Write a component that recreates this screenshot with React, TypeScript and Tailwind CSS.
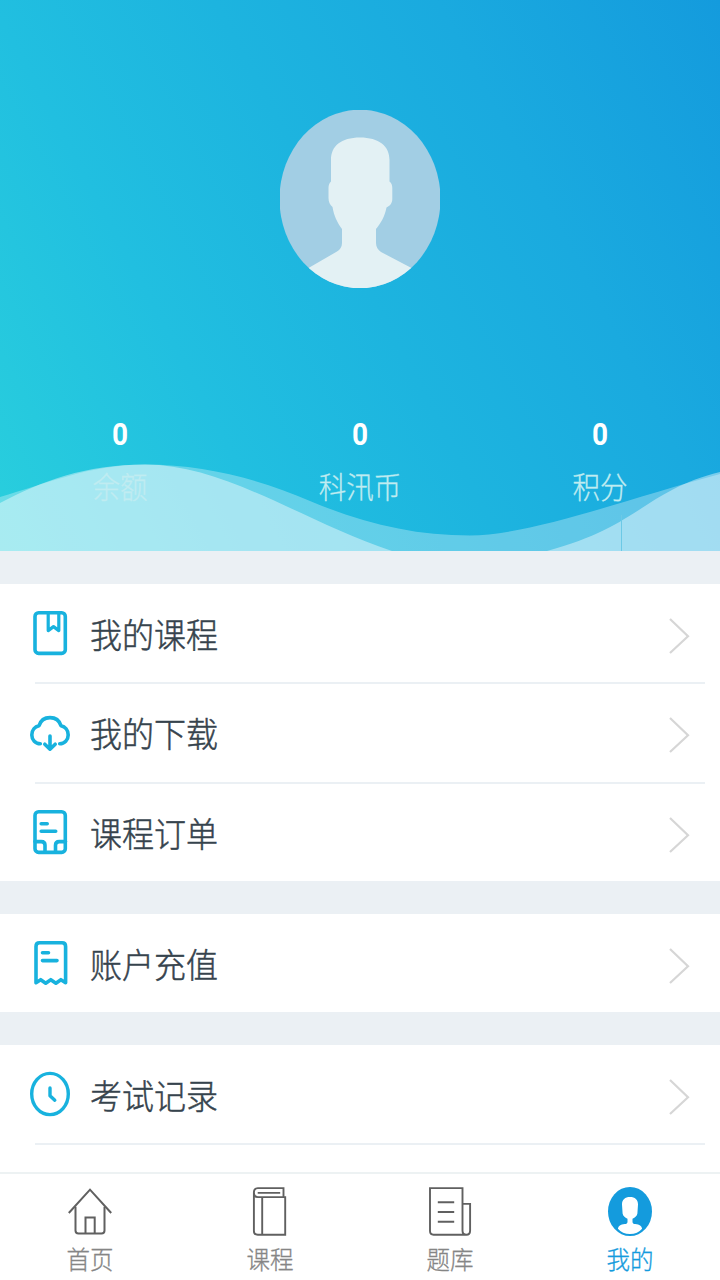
import React from 'react';

type IconProps = { className?: string };

const BookmarkIcon = ({ className }: IconProps) => (
  <svg viewBox="0 0 40 46" className={className} fill="none" stroke="currentColor" strokeWidth="3.6" strokeLinejoin="round">
    <rect x="5" y="2.8" width="30.3" height="40.6" rx="3.6" />
    <path d="M18.2 3v17.600l5.300-4 5.300 4V3" strokeWidth="3.2" />
  </svg>
);

const CloudIcon = ({ className }: IconProps) => (
  <svg viewBox="0 0 40 46" className={className} fill="none" stroke="currentColor" strokeWidth="3.6" strokeLinecap="round" strokeLinejoin="round">
    <path d="M10.3 33.7C5.5 33.7 1.8 29.8 1.8 24.9C1.8 20.3 4.9 16.6 9 15.7C10.7 10.2 15 7.6 20 7.6S29.3 10.2 31 15.7C35.1 16.6 38.2 20.3 38.2 24.9C38.2 29.8 34.5 33.7 29.7 33.7" />
    <path d="M20 26v13M14.8 34.2l5.2 5 5.200-5" />
  </svg>
);

const OrderIcon = ({ className }: IconProps) => (
  <svg viewBox="0 0 40 46" className={className} fill="none" stroke="currentColor" strokeWidth="3.6" strokeLinejoin="round" strokeLinecap="round">
    <rect x="5" y="2.8" width="30.3" height="40.6" rx="3.6" />
    <path d="M11.2 14.7h6M11.2 22.3h14.5" />
    <path d="M5 32.6h6.3q3.7 0 3.700 3.700v6.500M35.500 32.600h-6.300q-3.700 0-3.700 3.700v6.500" />
  </svg>
);

const ReceiptIcon = ({ className }: IconProps) => (
  <svg viewBox="0 0 40 46" className={className} fill="none" stroke="currentColor" strokeWidth="3.6" strokeLinejoin="round" strokeLinecap="round">
    <path d="M6 42.7V6.4q0-3.6 3.600-3.600H32q3.600 0 3.600 3.600v36.300l-4.700-3-5 3.500-5.100-3.500-5.100 3.500-5-3.500z" />
    <path d="M12.5 12.8h6M12.5 20.6h14.5" />
  </svg>
);

const ClockIcon = ({ className }: IconProps) => (
  <svg viewBox="0 0 40 46" className={className} fill="none" stroke="currentColor" strokeWidth="3.4" strokeLinecap="round" strokeLinejoin="round">
    <ellipse cx="20" cy="23" rx="18.3" ry="20.6" />
    <path d="M20 17v7.700l4.800 4.500" />
  </svg>
);

const Chevron = () => (
  <svg viewBox="0 0 22 38" className="mt-[5px] w-[22px] h-[38px]" fill="none" stroke="#d6d6d6" strokeWidth="2.2">
    <path d="M2 2l18 17.200L2 36" />
  </svg>
);

const HomeIcon = ({ className }: IconProps) => (
  <svg viewBox="0 0 44 50" className={className} fill="none" stroke="currentColor" strokeWidth="2">
    <path d="M.8 26L22 2.700 43.200 26" />
    <path d="M7.500 19.800v23.800q0 3 3 3h23q3 0 3-3V19.800" />
    <path d="M17.500 46.500V30.500h9.200v16" />
  </svg>
);

const BookIcon = ({ className }: IconProps) => (
  <svg viewBox="0 0 44 50" className={className} fill="none" stroke="currentColor" strokeWidth="1.9">
    <path d="M35.500 10.100V1.100H9.800q-3.900 0-3.900 4.500t3.900 4.500H37.200v37.600H9.800q-3.900 0-3.900-3.700V5.600" />
    <path d="M14.200 10.100v37.600M9.700 5.900h22.500" />
  </svg>
);

const PaperIcon = ({ className }: IconProps) => (
  <svg viewBox="0 0 44 50" className={className} fill="none" stroke="currentColor" strokeWidth="1.9">
    <path d="M34.500 43.700V1.100H2v43q0 3.600 3.600 3.600h32.800q3.700 0 3.700-4V16.900h-7.600M34.500 43.700q0 4 3.900 4" />
    <path d="M9.800 15.200h16.400M9.800 25h16.400M9.800 34.700h16.400" strokeWidth="2.1" />
  </svg>
);

const UserIcon = ({ className }: IconProps) => (
  <svg viewBox="0 0 44 50" className={className}>
    <ellipse cx="22" cy="24.5" rx="22" ry="24.5" fill="#149bdd" />
    <path
      fill="#fff"
      d="M22 10c5 0 8 2.600 8 7.500l-.6 9c-.4 2.400-2.200 4-4.900 5.200v3c0 1.500 1 2.200 2.800 2.400 4.300.5 6.300 2 6.800 4.600C31.200 45.300 27 47 22 47s-9.200-1.700-12.100-5.300c.5-2.600 2.500-4.100 6.800-4.600 1.800-.2 2.800-.9 2.800-2.400v-3c-2.700-1.200-4.500-2.800-4.900-5.200L14 17.500c0-4.900 3-7.500 8-7.500z"
    />
  </svg>
);

const Avatar = () => (
  <svg viewBox="0 0 160 178" className="w-40 h-[178px]">
    <defs>
      <clipPath id="avatar">
        <ellipse cx="80" cy="89" rx="80.5" ry="89.3" />
      </clipPath>
    </defs>
    <g clipPath="url(#avatar)">
      <rect width="160" height="178" fill="#a2cee4" />
      <path
        fill="#e3f1f4"
        d="M51 50C51 36 61 27.500 80 27.500S109.500 36 109.500 50V71.500C111.500 73 112.300 75 112.300 78V89C112.300 93 110 96 106.500 97.500C105 106 101 113 96 119V133C96 137 98 140 101 142L131.500 158V178H28.500V158L57 141.500C60 139.500 62 137 62 133V119C57 112 54 106 52.500 97C50 95 48.500 92 48.500 88V78C48.500 75 49.300 73 51 71.500Z"
      />
    </g>
  </svg>
);

const Waves = () => (
  <svg viewBox="0 0 720 91" className="absolute inset-x-0 bottom-0 w-full h-[91px]">
    <path
      fill="#fff"
      fillOpacity=".3"
      d="M0 37C45 24 90 4.500 145 4.500C205 4.500 262 20 310 41C365 64 415 75.500 470 75.500C530 75.500 630 38 720 14V91H0Z"
    />
    <path fill="#fff" fillOpacity=".42" d="M0 43C42 21 85 4.500 145 4.500C225 4.500 300 60 392 91H0ZM547 91C640 66 646 30 720 12V91Z" />
    <path d="M621.500 55v36" stroke="#6cc9e6" strokeWidth="1" />
  </svg>
);

const stats = [
  { label: '余额', value: 0 },
  { label: '科汛币', value: 0 },
  { label: '积分', value: 0 },
];

const groups = [
  [
    { label: '我的课程', icon: BookmarkIcon },
    { label: '我的下载', icon: CloudIcon },
    { label: '课程订单', icon: OrderIcon },
  ],
  [{ label: '账户充值', icon: ReceiptIcon }],
  [{ label: '考试记录', icon: ClockIcon }],
];

const tabs = [
  { label: '首页', icon: HomeIcon },
  { label: '课程', icon: BookIcon },
  { label: '题库', icon: PaperIcon },
  { label: '我的', icon: UserIcon, active: true },
];

const Divider = () => <div className="ml-[35px] mr-[15px] h-[2px] -mb-[0.5px] bg-[#ebf0f4]" />;

const App: React.FC = () => {
  return (
    <div className="w-[720px] h-[1280px] flex flex-col overflow-hidden bg-[#ebf0f4] font-['Roboto','Noto_Sans_CJK_SC',sans-serif]">
      <header className="relative h-[551px] shrink-0 flex flex-col items-center pt-[110px] bg-[linear-gradient(62deg,#29cfdd_0%,#21bfe0_28%,#1db4df_50%,#1aaadf_72%,#149bdd_100%)]">
        <Avatar />
        <Waves />
        <div className="relative mt-[126px] w-full grid grid-cols-3 text-center text-white">
          {stats.map((stat) => (
            <div key={stat.label} className="flex flex-col items-center">
              <span className="text-[28px] leading-[42px] font-bold scale-y-[1.14]">{stat.value}</span>
              <span className="mt-[11px] text-[27.5px] leading-[42px] font-light text-[#c0ecf1] [-webkit-text-stroke:0.3px] scale-y-[1.08]">
                {stat.label}
              </span>
            </div>
          ))}
        </div>
      </header>

      <main className="flex-1 min-h-0 overflow-hidden pt-[33px] flex flex-col gap-[33px]">
        {groups.map((group, i) => (
          <section key={i} className="bg-white shrink-0 last:flex-1">
            {group.map(({ label, icon: Icon }, j) => (
              <div key={label}>
                {j > 0 && <Divider />}
                <div className="h-[98px] px-[30px] flex items-center">
                  <Icon className="w-10 h-[46px] text-[#18b2de]" />
                  <span className="mt-[5px] ml-[20px] flex-1 text-[32px] leading-[48px] font-light text-[#36434d] [-webkit-text-stroke:0.45px] scale-y-[1.08]">
                    {label}
                  </span>
                  <Chevron />
                </div>
              </div>
            ))}
            {i === groups.length - 1 && <Divider />}
          </section>
        ))}
      </main>

      <nav className="h-[108px] shrink-0 grid grid-cols-4 bg-white border-t-2 border-[#edf2f3]">
        {tabs.map(({ label, icon: Icon, active }) => (
          <div key={label} className="flex flex-col items-center pt-[13px]">
            <Icon className="w-11 h-[50px] text-[#606060]" />
            <span
              className={`mt-[5px] text-[23.5px] leading-[36px] font-light [-webkit-text-stroke:0.3px] scale-y-[1.08] ${
                active ? 'text-[#149bdd]' : 'text-[#858585]'
              }`}
            >
              {label}
            </span>
          </div>
        ))}
      </nav>
    </div>
  );
};

export default App;
